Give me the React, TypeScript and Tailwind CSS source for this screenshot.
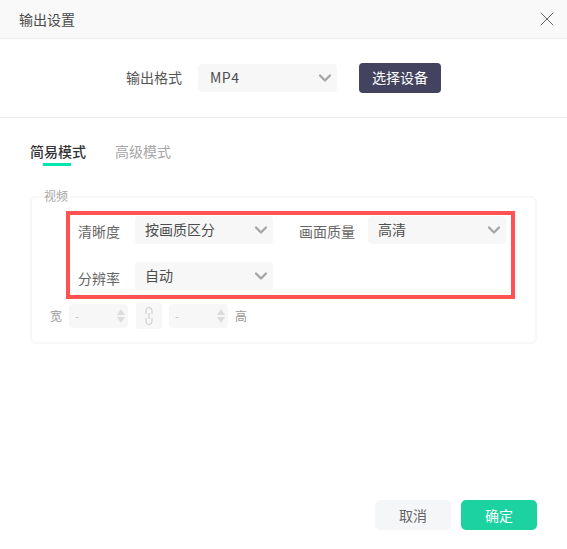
import { ChevronDown, X } from "lucide-react";

const font = { fontFamily: '"Noto Sans CJK SC", "Liberation Sans", sans-serif' };

function Select({ value, className = "" }: { value: string; className?: string }) {
  return (
    <div className={`flex h-7 items-center justify-between rounded-[4px] bg-[#f7f7f7] pr-[2px] text-[14px] text-[#4d4d4d] ${className}`}>
      <span className="-mt-[1px]">{value}</span>
      <ChevronDown size={20} strokeWidth={2.6} className="text-[#a3a3a3]" />
    </div>
  );
}

function Stepper() {
  return (
    <div className="flex h-6 w-[59px] items-center justify-between rounded-[4px] bg-[#f7f7f7] pl-[6px] pr-[3px] text-[12px] text-[#c4c4c4]">
      <span>-</span>
      <span className="flex flex-col gap-[2px]">
        <span className="h-0 w-0 border-x-[4px] border-b-[6px] border-x-transparent border-b-[#dcdcdc]" />
        <span className="h-0 w-0 border-x-[4px] border-t-[6px] border-x-transparent border-t-[#dcdcdc]" />
      </span>
    </div>
  );
}

export default function App() {
  return (
    <div className="relative flex h-[549px] w-[567px] flex-col bg-white" style={font}>
      <div className="flex h-[39px] items-center justify-between border-b border-[#ededed] bg-[#f9f9f9] pl-[19px] pr-[8px]">
        <span className="text-[14px] text-[#4a4a4a]">输出设置</span>
        <X size={24} strokeWidth={1} className="text-[#666]" />
      </div>

      <div className="flex h-[79px] items-center border-b border-[#ededed] pl-[126px] pb-[1px]">
        <span className="text-[14px] text-[#555]">输出格式</span>
        <Select value="MP4" className="ml-[16px] w-[139px] pl-[12px] tracking-[0.5px]" />
        <button className="ml-[22px] h-[30px] w-[82px] rounded-[4px] bg-[#434360] text-[14px] text-white">选择设备</button>
      </div>

      <div className="flex gap-[29px] pl-[30px] pt-[22px]">
        <div className="flex flex-col items-center">
          <span className="text-[14px] leading-[22px] font-medium text-[#333]">简易模式</span>
          <span className="mr-[2px] mt-[1px] h-[3px] w-[28px] bg-[#00e6b0]" />
        </div>
        <span className="text-[14px] leading-[22px] text-[#a6a6a6]">高级模式</span>
      </div>

      <div className="relative mx-[30px] mt-[30px] h-[148px] rounded-[6px] border-2 border-[#f7f7f7] pt-[18px]">
        <span className="absolute -top-[9px] left-[10px] bg-white px-[2px] text-[12px] leading-[14px] text-[#a6a6a6]">视频</span>
        <div className="flex items-center pl-[46px]">
          <span className="w-[57px] pt-[2px] text-[14px] text-[#666]">清晰度</span>
          <Select value="按画质区分" className="w-[138px] pl-[10px]" />
          <span className="ml-[26px] w-[69px] pt-[2px] text-[14px] text-[#666]">画面质量</span>
          <Select value="高清" className="w-[138px] pl-[10px]" />
        </div>
        <div className="mt-[18px] flex items-center pl-[46px]">
          <span className="w-[57px] pt-[4px] text-[14px] text-[#666]">分辨率</span>
          <Select value="自动" className="w-[138px] pl-[10px]" />
        </div>
        <div className="mt-[13px] flex items-center pl-[18px] text-[12px] text-[#999]">
          <span className="w-[19px]">宽</span>
          <Stepper />
          <div className="ml-[8px] flex h-[26px] w-[26px] items-center justify-center rounded-[3px] bg-[#f7f7f7]">
            <svg width="8" height="18" viewBox="0 0 8 18" fill="none" stroke="#c8c8c8" strokeWidth="1">
              <path d="M1 7V3.5a3 3 0 0 1 6 0V7M1 11v3.5a3 3 0 0 0 6 0V11M4 6v6" />
            </svg>
          </div>
          <div className="ml-[7px]"><Stepper /></div>
          <span className="ml-[7px]">高</span>
        </div>
      </div>

      <div className="mt-auto flex justify-end gap-[10px] pb-[19px] pr-[30px]">
        <button className="h-[30px] w-[76px] rounded-[5px] bg-[#f5f6f8] text-[14px] text-[#666]">取消</button>
        <button className="h-[30px] w-[76px] rounded-[5px] bg-[#1bd2a0] text-[14px] text-white">确定</button>
      </div>

      {/* annotation drawn on top of the form */}
      <div className="pointer-events-none absolute left-[66px] top-[211px] h-[88px] w-[449px] border-[4px] border-[#ff5252]" />
    </div>
  );
}
